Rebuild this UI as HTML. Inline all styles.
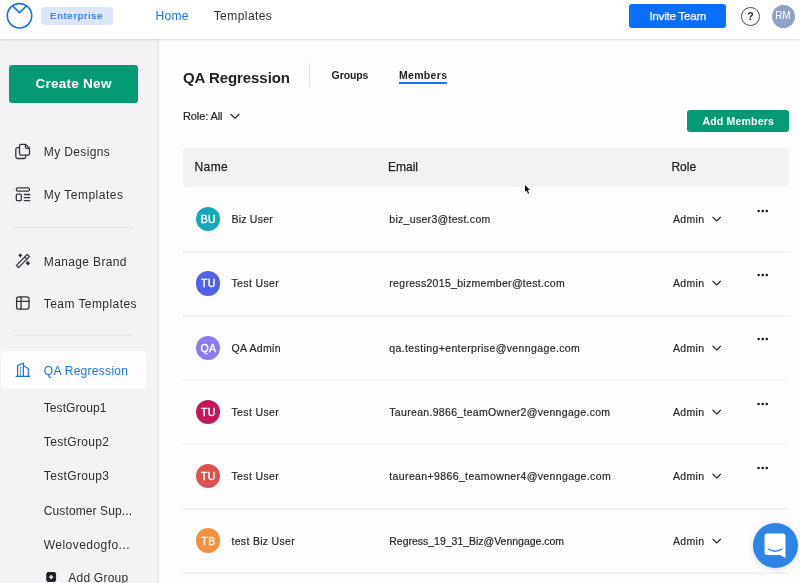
<!DOCTYPE html>
<html lang="en">
<head>
<meta charset="utf-8">
<title>QA Regression - Members</title>
<style>
html,body{margin:0;padding:0;}
body{width:800px;height:583px;overflow:hidden;position:relative;background:#fefdfe;font-family:"Liberation Sans",sans-serif;}
.a{position:absolute;}
.t{position:absolute;white-space:pre;display:block;}
#hdr{left:0;top:0;width:800px;height:38.5px;background:#fff;box-shadow:0 1px 2px rgba(60,50,70,.16);z-index:5;}
#side{left:0;top:38px;width:159px;height:545px;background:#f4f2f4;box-shadow:inset -2.5px 0 2px -1px rgba(40,30,60,.055);}
.sep{left:183px;width:606px;height:1.7px;background:#f2f1f3;}
.av{width:24.4px;height:24.4px;border-radius:50%;left:196px;}
svg{position:absolute;overflow:visible;}
</style>
</head>
<body>
<div class="a" id="side"></div>
<div class="a" id="hdr"></div>
<div id="layer" class="a" style="left:0;top:0;width:800px;height:583px;z-index:6;will-change:transform;">
<svg style="left:0;top:0" width="40" height="39" viewBox="0 0 40 39"><circle cx="19.5" cy="15.8" r="12.2" fill="none" stroke="#1a6ee6" stroke-width="1.6"/><path d="M12.6 5.9 L19.4 12.6 L26.6 5.9" fill="none" stroke="#1a6ee6" stroke-width="1.5"/></svg>
<div class="a" style="left:41.25px;top:7.00px;width:71.25px;height:18.00px;background:#dbe6fc;border-radius:4px;"></div>
<div class="a" style="left:629.30px;top:4.20px;width:96.50px;height:24.00px;background:#0a6ffc;border-radius:3px;"></div>
<div class="a" style="left:741px;top:7px;width:16.8px;height:16.8px;border:1px solid #4a4a4a;border-radius:50%;"></div>
<div class="a" style="left:771.50px;top:4.80px;width:23.00px;height:23.00px;background:#90a2c6;border-radius:12px;"></div>
<div class="a" style="left:9.00px;top:65.00px;width:129.00px;height:38.00px;background:#049b74;border-radius:3px;"></div>
<div class="a" style="left:14.00px;top:226.50px;width:119.00px;height:1.30px;background:#e3e2e6;border-radius:0px;"></div>
<div class="a" style="left:14.00px;top:334.80px;width:119.00px;height:1.30px;background:#e3e2e6;border-radius:0px;"></div>
<div class="a" style="left:1.00px;top:351.00px;width:145.00px;height:37.80px;background:#fdfcfe;border-radius:4px;"></div>
<div class="a" style="left:308.70px;top:63.00px;width:1.50px;height:24.00px;background:#dedde1;border-radius:0px;"></div>
<div class="a" style="left:399.00px;top:82.30px;width:48.00px;height:1.30px;background:#1a73e8;border-radius:0px;"></div>
<div class="a" style="left:687.00px;top:110.40px;width:102.20px;height:21.90px;background:#049b74;border-radius:3px;"></div>
<div class="a" style="left:182.80px;top:147.60px;width:606.40px;height:39.40px;background:#f3f1f3;border-radius:4px;"></div>
<div class="a sep" style="top:250.90px"></div>
<div class="a av" style="top:206.90px;background:#17a7b9"></div>
<svg style="left:756px;top:207.60px" width="14" height="6" viewBox="0 0 14 6"><circle cx="2.6" cy="3" r="1.3" fill="#1c1c1c"/><circle cx="6.7" cy="3" r="1.3" fill="#1c1c1c"/><circle cx="10.8" cy="3" r="1.3" fill="#1c1c1c"/></svg>
<svg style="left:712px;top:216.10px" width="10" height="7" viewBox="0 0 10 7"><path d="M0.6 1 L4.7 5 L8.8 1" fill="none" stroke="#222" stroke-width="1.1"/></svg>
<div class="a sep" style="top:315.20px"></div>
<div class="a av" style="top:271.20px;background:#4f62e8"></div>
<svg style="left:756px;top:271.90px" width="14" height="6" viewBox="0 0 14 6"><circle cx="2.6" cy="3" r="1.3" fill="#1c1c1c"/><circle cx="6.7" cy="3" r="1.3" fill="#1c1c1c"/><circle cx="10.8" cy="3" r="1.3" fill="#1c1c1c"/></svg>
<svg style="left:712px;top:280.40px" width="10" height="7" viewBox="0 0 10 7"><path d="M0.6 1 L4.7 5 L8.8 1" fill="none" stroke="#222" stroke-width="1.1"/></svg>
<div class="a sep" style="top:379.50px"></div>
<div class="a av" style="top:335.50px;background:#8b7af0"></div>
<svg style="left:756px;top:336.20px" width="14" height="6" viewBox="0 0 14 6"><circle cx="2.6" cy="3" r="1.3" fill="#1c1c1c"/><circle cx="6.7" cy="3" r="1.3" fill="#1c1c1c"/><circle cx="10.8" cy="3" r="1.3" fill="#1c1c1c"/></svg>
<svg style="left:712px;top:344.70px" width="10" height="7" viewBox="0 0 10 7"><path d="M0.6 1 L4.7 5 L8.8 1" fill="none" stroke="#222" stroke-width="1.1"/></svg>
<div class="a sep" style="top:443.80px"></div>
<div class="a av" style="top:399.80px;background:#c2185b"></div>
<svg style="left:756px;top:400.50px" width="14" height="6" viewBox="0 0 14 6"><circle cx="2.6" cy="3" r="1.3" fill="#1c1c1c"/><circle cx="6.7" cy="3" r="1.3" fill="#1c1c1c"/><circle cx="10.8" cy="3" r="1.3" fill="#1c1c1c"/></svg>
<svg style="left:712px;top:409.00px" width="10" height="7" viewBox="0 0 10 7"><path d="M0.6 1 L4.7 5 L8.8 1" fill="none" stroke="#222" stroke-width="1.1"/></svg>
<div class="a sep" style="top:508.10px"></div>
<div class="a av" style="top:464.10px;background:#d9534f"></div>
<svg style="left:756px;top:464.80px" width="14" height="6" viewBox="0 0 14 6"><circle cx="2.6" cy="3" r="1.3" fill="#1c1c1c"/><circle cx="6.7" cy="3" r="1.3" fill="#1c1c1c"/><circle cx="10.8" cy="3" r="1.3" fill="#1c1c1c"/></svg>
<svg style="left:712px;top:473.30px" width="10" height="7" viewBox="0 0 10 7"><path d="M0.6 1 L4.7 5 L8.8 1" fill="none" stroke="#222" stroke-width="1.1"/></svg>
<div class="a sep" style="top:572.40px"></div>
<div class="a av" style="top:528.40px;background:#f5903f"></div>
<svg style="left:712px;top:537.60px" width="10" height="7" viewBox="0 0 10 7"><path d="M0.6 1 L4.7 5 L8.8 1" fill="none" stroke="#222" stroke-width="1.1"/></svg>
<svg style="left:230.3px;top:113.4px" width="10" height="7" viewBox="0 0 10 7"><path d="M0.6 1 L5 5.2 L9.4 1" fill="none" stroke="#222" stroke-width="1.1"/></svg>
<div class="a" style="left:753.4px;top:523.1px;width:45px;height:45px;border-radius:50%;background:#2b84e6;box-shadow:0 1px 6px rgba(0,0,0,.15);"></div>
<svg style="left:753.4px;top:523.1px" width="45" height="45" viewBox="0 0 45 45"><path d="M14 10.5 H30 a2.5 2.5 0 0 1 2.500 2.5 V35 L27 32 H14 a2.5 2.5 0 0 1 -2.5 -2.5 V13 a2.5 2.5 0 0 1 2.5 -2.5 Z" fill="#fff"/><path d="M15.2 26 Q22 30.500 29 26" fill="none" stroke="#2b84e6" stroke-width="1.4" stroke-linecap="round"/></svg>
<svg style="left:524.9px;top:184.7px" width="6" height="10" viewBox="0 0 6 10"><path d="M0 0 L0 6.900 L1.600 5.500 L3 8.700 L4.100 8.200 L2.800 5.100 L5 5 Z" fill="#0c0c0c" stroke="#fff" stroke-width="0.5" paint-order="stroke"/></svg>
<svg style="left:0;top:0" width="160" height="583" viewBox="0 0 160 583" fill="none" stroke="#34343a" stroke-width="1.3" stroke-linejoin="round" stroke-linecap="round">
<!-- my designs -->
<path d="M21.3 144.4 h4.300 l3.900 3.900 v5.100 a1.800 1.800 0 0 1 -1.800 1.800 h-6.400 a1.800 1.800 0 0 1 -1.800 -1.800 v-7.200 a1.800 1.800 0 0 1 1.800 -1.800 z"/>
<path d="M25.4 144.6 v2.300 a1.400 1.400 0 0 0 1.400 1.400 h2.500"/>
<path d="M19.300 147.700 h-1.700 a1.800 1.800 0 0 0 -1.800 1.800 v7.200 a1.800 1.800 0 0 0 1.800 1.800 h6.400 a1.800 1.800 0 0 0 1.800 -1.800 v-1.300"/>
<!-- my templates -->
<rect x="16.3" y="187.800" width="13.2" height="3.400" rx="1.500"/>
<rect x="16.3" y="194.100" width="5" height="6.600" rx="1.200"/>
<path d="M24.300 194.500 h5.400 M24.300 197.600 h5.400 M24.300 200.700 h5.400"/>
<!-- manage brand: wand -->
<g transform="translate(22.900 261.050) rotate(-45.800)">
<rect x="-7.800" y="-1.500" width="15.600" height="3" stroke-width="1.200" stroke-linejoin="miter"/>
<path d="M4.200 -1.500 v3" stroke-width="1.100"/>
</g>
<path d="M20.300 253.700 l0.650 1.150 l1.150 0.650 l-1.150 0.650 l-0.650 1.150 l-0.650 -1.150 l-1.150 -0.650 l1.150 -0.650 z" fill="#26262b" stroke-width="0.600"/>
<path d="M27.800 261.200 l0.800 1.200 l1.200 0.800 l-1.200 0.800 l-0.800 1.200 l-0.800 -1.200 l-1.200 -0.800 l1.200 -0.800 z" fill="#26262b" stroke-width="0.700"/>
<!-- team templates -->
<rect x="16.600" y="296.800" width="12.400" height="12.400" rx="2.200"/>
<path d="M21 296.800 v12.400 M16.600 301.300 h12.400"/>
<!-- building (active) -->
<g stroke="#1a73e8" stroke-width="1.200">
<path d="M16 376.300 h13.600"/>
<path d="M17.600 376.300 v-10.700 l5.800 -2.600 v13.300"/>
<path d="M23.400 365.800 l4.900 2.800 v7.700"/>
<path d="M20.400 367.300 v8" stroke-dasharray="0.800 1.500" stroke-width="1"/>
</g>
<!-- add group -->
<rect x="46.800" y="572.600" width="8.800" height="8.800" rx="1.300" fill="#1f1f24" stroke="#1f1f24" stroke-width="1"/>
<path d="M51.200 574.900 v4.300 M49.050 577.050 h4.300" stroke="#fff" stroke-width="1.300" stroke-linecap="butt"/>
</svg>

<span class="t" style="left:50.00px;top:11.10px;font-size:9.8px;line-height:9.8px;font-weight:400;color:#1f6fe0;letter-spacing:0.872px;-webkit-text-stroke:0.15px #1f6fe0;">Enterprise</span>
<span class="t" style="left:155.40px;top:9.54px;font-size:12px;line-height:12px;font-weight:400;color:#1a73e8;letter-spacing:0.328px;">Home</span>
<span class="t" style="left:213.70px;top:9.54px;font-size:12px;line-height:12px;font-weight:400;color:#2d2d2d;letter-spacing:0.437px;">Templates</span>
<span class="t" style="left:649.40px;top:10.76px;font-size:11.8px;line-height:11.8px;font-weight:400;color:#fff;letter-spacing:-0.326px;-webkit-text-stroke:0.25px #fff;">Invite Team</span>
<span class="t" style="left:747.20px;top:11.01px;font-size:10.5px;line-height:10.5px;font-weight:700;color:#2a2a2a;letter-spacing:0.000px;">?</span>
<span class="t" style="left:775.30px;top:11.14px;font-size:10px;line-height:10px;font-weight:400;color:#fff;letter-spacing:-0.162px;">RM</span>
<span class="t" style="left:35.50px;top:76.97px;font-size:13.5px;line-height:13.5px;font-weight:700;color:#fff;letter-spacing:0.261px;">Create New</span>
<span class="t" style="left:43.80px;top:145.54px;font-size:12px;line-height:12px;font-weight:400;color:#2f2f2f;letter-spacing:0.368px;">My Designs</span>
<span class="t" style="left:43.80px;top:188.74px;font-size:12px;line-height:12px;font-weight:400;color:#2f2f2f;letter-spacing:0.481px;">My Templates</span>
<span class="t" style="left:43.80px;top:255.54px;font-size:12px;line-height:12px;font-weight:400;color:#2f2f2f;letter-spacing:0.361px;">Manage Brand</span>
<span class="t" style="left:43.80px;top:297.54px;font-size:12px;line-height:12px;font-weight:400;color:#2f2f2f;letter-spacing:0.426px;">Team Templates</span>
<span class="t" style="left:43.80px;top:364.54px;font-size:12px;line-height:12px;font-weight:400;color:#1a73e8;letter-spacing:0.290px;">QA Regression</span>
<span class="t" style="left:43.80px;top:402.14px;font-size:12px;line-height:12px;font-weight:400;color:#2f2f2f;letter-spacing:0.061px;">TestGroup1</span>
<span class="t" style="left:43.80px;top:435.94px;font-size:12px;line-height:12px;font-weight:400;color:#2f2f2f;letter-spacing:0.350px;">TestGroup2</span>
<span class="t" style="left:43.80px;top:469.84px;font-size:12px;line-height:12px;font-weight:400;color:#2f2f2f;letter-spacing:0.350px;">TestGroup3</span>
<span class="t" style="left:43.80px;top:504.64px;font-size:12px;line-height:12px;font-weight:400;color:#2f2f2f;letter-spacing:0.107px;">Customer Sup...</span>
<span class="t" style="left:43.80px;top:538.54px;font-size:12px;line-height:12px;font-weight:400;color:#2f2f2f;letter-spacing:0.452px;">Welovedogfo...</span>
<span class="t" style="left:68.30px;top:571.74px;font-size:12px;line-height:12px;font-weight:400;color:#2f2f2f;letter-spacing:0.219px;">Add Group</span>
<span class="t" style="left:183.00px;top:70.30px;font-size:15px;line-height:15px;font-weight:700;color:#222;letter-spacing:-0.068px;">QA Regression</span>
<span class="t" style="left:331.60px;top:69.71px;font-size:10.5px;line-height:10.5px;font-weight:700;color:#222;letter-spacing:-0.109px;">Groups</span>
<span class="t" style="left:399.00px;top:69.71px;font-size:10.5px;line-height:10.5px;font-weight:700;color:#222;letter-spacing:0.315px;">Members</span>
<span class="t" style="left:183.00px;top:111.09px;font-size:11px;line-height:11px;font-weight:400;color:#222;letter-spacing:-0.120px;-webkit-text-stroke:0.18px #222;">Role: All</span>
<span class="t" style="left:702.50px;top:115.86px;font-size:10.5px;line-height:10.5px;font-weight:700;color:#fff;letter-spacing:0.186px;">Add Members</span>
<span class="t" style="left:194.40px;top:161.34px;font-size:12px;line-height:12px;font-weight:400;color:#222;letter-spacing:0.461px;-webkit-text-stroke:0.25px #222;">Name</span>
<span class="t" style="left:388.00px;top:161.34px;font-size:12px;line-height:12px;font-weight:400;color:#222;letter-spacing:-0.004px;-webkit-text-stroke:0.25px #222;">Email</span>
<span class="t" style="left:671.40px;top:161.34px;font-size:12px;line-height:12px;font-weight:400;color:#222;letter-spacing:0.038px;-webkit-text-stroke:0.25px #222;">Role</span>
<span class="t" style="left:200.85px;top:214.01px;font-size:10.5px;line-height:10.5px;font-weight:400;color:#fff;letter-spacing:0.206px;-webkit-text-stroke:0.4px #fff;">BU</span>
<span class="t" style="left:231.50px;top:214.01px;font-size:10.5px;line-height:10.5px;font-weight:400;color:#262626;letter-spacing:0.216px;-webkit-text-stroke:0.18px #262626;">Biz User</span>
<span class="t" style="left:389.30px;top:214.01px;font-size:10.5px;line-height:10.5px;font-weight:400;color:#262626;letter-spacing:0.301px;-webkit-text-stroke:0.18px #262626;">biz_user3@test.com</span>
<span class="t" style="left:673.00px;top:214.01px;font-size:10.5px;line-height:10.5px;font-weight:400;color:#262626;letter-spacing:0.334px;-webkit-text-stroke:0.18px #262626;">Admin</span>
<span class="t" style="left:201.10px;top:278.31px;font-size:10.5px;line-height:10.5px;font-weight:400;color:#fff;letter-spacing:0.300px;-webkit-text-stroke:0.4px #fff;">TU</span>
<span class="t" style="left:231.50px;top:278.31px;font-size:10.5px;line-height:10.5px;font-weight:400;color:#262626;letter-spacing:0.370px;-webkit-text-stroke:0.18px #262626;">Test User</span>
<span class="t" style="left:389.30px;top:278.31px;font-size:10.5px;line-height:10.5px;font-weight:400;color:#262626;letter-spacing:0.307px;-webkit-text-stroke:0.18px #262626;">regress2015_bizmember@test.com</span>
<span class="t" style="left:673.00px;top:278.31px;font-size:10.5px;line-height:10.5px;font-weight:400;color:#262626;letter-spacing:0.334px;-webkit-text-stroke:0.18px #262626;">Admin</span>
<span class="t" style="left:200.45px;top:342.61px;font-size:10.5px;line-height:10.5px;font-weight:400;color:#fff;letter-spacing:0.428px;-webkit-text-stroke:0.4px #fff;">QA</span>
<span class="t" style="left:231.50px;top:342.61px;font-size:10.5px;line-height:10.5px;font-weight:400;color:#262626;letter-spacing:0.328px;-webkit-text-stroke:0.18px #262626;">QA Admin</span>
<span class="t" style="left:389.30px;top:342.61px;font-size:10.5px;line-height:10.5px;font-weight:400;color:#262626;letter-spacing:0.382px;-webkit-text-stroke:0.18px #262626;">qa.testing+enterprise@venngage.com</span>
<span class="t" style="left:673.00px;top:342.61px;font-size:10.5px;line-height:10.5px;font-weight:400;color:#262626;letter-spacing:0.334px;-webkit-text-stroke:0.18px #262626;">Admin</span>
<span class="t" style="left:201.10px;top:406.91px;font-size:10.5px;line-height:10.5px;font-weight:400;color:#fff;letter-spacing:0.300px;-webkit-text-stroke:0.4px #fff;">TU</span>
<span class="t" style="left:231.50px;top:406.91px;font-size:10.5px;line-height:10.5px;font-weight:400;color:#262626;letter-spacing:0.370px;-webkit-text-stroke:0.18px #262626;">Test User</span>
<span class="t" style="left:389.30px;top:406.91px;font-size:10.5px;line-height:10.5px;font-weight:400;color:#262626;letter-spacing:0.317px;-webkit-text-stroke:0.18px #262626;">Taurean.9866_teamOwner2@venngage.com</span>
<span class="t" style="left:673.00px;top:406.91px;font-size:10.5px;line-height:10.5px;font-weight:400;color:#262626;letter-spacing:0.334px;-webkit-text-stroke:0.18px #262626;">Admin</span>
<span class="t" style="left:201.10px;top:471.21px;font-size:10.5px;line-height:10.5px;font-weight:400;color:#fff;letter-spacing:0.300px;-webkit-text-stroke:0.4px #fff;">TU</span>
<span class="t" style="left:231.50px;top:471.21px;font-size:10.5px;line-height:10.5px;font-weight:400;color:#262626;letter-spacing:0.370px;-webkit-text-stroke:0.18px #262626;">Test User</span>
<span class="t" style="left:389.30px;top:471.21px;font-size:10.5px;line-height:10.5px;font-weight:400;color:#262626;letter-spacing:0.375px;-webkit-text-stroke:0.18px #262626;">taurean+9866_teamowner4@venngage.com</span>
<span class="t" style="left:673.00px;top:471.21px;font-size:10.5px;line-height:10.5px;font-weight:400;color:#262626;letter-spacing:0.334px;-webkit-text-stroke:0.18px #262626;">Admin</span>
<span class="t" style="left:201.25px;top:535.51px;font-size:10.5px;line-height:10.5px;font-weight:400;color:#fff;letter-spacing:0.578px;-webkit-text-stroke:0.4px #fff;">TB</span>
<span class="t" style="left:231.50px;top:535.51px;font-size:10.5px;line-height:10.5px;font-weight:400;color:#262626;letter-spacing:0.307px;-webkit-text-stroke:0.18px #262626;">test Biz User</span>
<span class="t" style="left:389.30px;top:535.51px;font-size:10.5px;line-height:10.5px;font-weight:400;color:#262626;letter-spacing:-0.017px;-webkit-text-stroke:0.18px #262626;">Regress_19_31_Biz@Venngage.com</span>
<span class="t" style="left:673.00px;top:535.51px;font-size:10.5px;line-height:10.5px;font-weight:400;color:#262626;letter-spacing:0.334px;-webkit-text-stroke:0.18px #262626;">Admin</span>
</div>
</body>
</html>
